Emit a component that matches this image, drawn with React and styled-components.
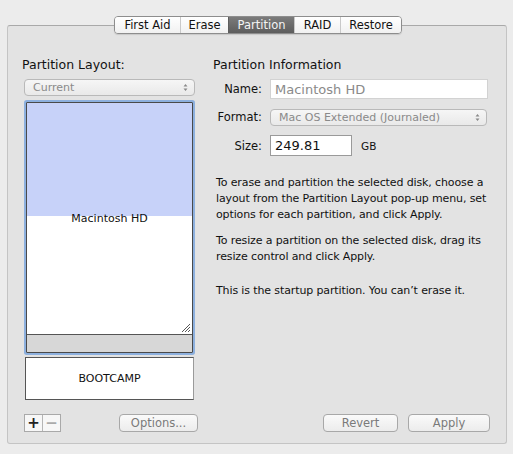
import React from 'react'
import styled, { createGlobalStyle, css } from 'styled-components'

const GlobalStyle = createGlobalStyle`
  html, body {
    margin: 0;
    padding: 0;
    background: #ececec;
  }
  body {
    font-family: "Lucida Grande", "DejaVu Sans", sans-serif;
    color: #111;
    -webkit-font-smoothing: antialiased;
  }
`

const Window = styled.div`
  width: 513px;
  height: 454px;
  box-sizing: border-box;
  padding: 16px 6px 10px 7px;
  display: flex;
  flex-direction: column;
`

const TabBar = styled.div`
  display: flex;
  align-self: flex-start;
  margin-left: 107px;
  margin-bottom: -9px;
  position: relative;
  z-index: 1;
  border: 1px solid #8d8d8d;
  border-radius: 4px;
  overflow: hidden;
  box-shadow: 0 1px 1px rgba(0, 0, 0, 0.12);
`

const Tab = styled.div`
  width: ${({ $w }) => $w}px;
  height: 16px;
  line-height: 16px;
  text-align: center;
  font-size: 11.5px;
  background: linear-gradient(#ffffff, #f1f1f1);
  color: #111;
  & + & {
    border-left: 1px solid #c9c9c9;
  }
  ${({ $active }) =>
    $active &&
    css`
      background: linear-gradient(#7b7b7b, #5d5d5d);
      color: #f4f4f4;
      border-left-color: #5d5d5d !important;
    `}
`

const Panel = styled.div`
  flex: 1;
  background: #e3e3e3;
  border: 1px solid #c4c4c4;
  border-top-color: #a9a9a9;
  border-radius: 3px;
  padding: 31px 16px 11px 16px;
  display: grid;
  grid-template-columns: 171px 1fr;
  column-gap: 18px;
`

const Column = styled.div`
  display: flex;
  flex-direction: column;
  min-height: 0;
`

const Heading = styled.div`
  font-size: 12.5px;
  height: 16px;
  line-height: 16px;
  margin-bottom: ${({ $mb }) => $mb}px;
  margin-left: ${({ $ml }) => $ml || 0}px;
`

const Popup = styled.div`
  height: 15px;
  border: 1px solid #b9b9b9;
  border-radius: 4px;
  background: linear-gradient(#f6f6f6, #e9e9e9);
  display: flex;
  align-items: center;
  justify-content: space-between;
  padding: 0 6px 0 8px;
  font-size: 11px;
  color: #8a8a8a;
  width: ${({ $w }) => $w}px;
`

const MapBox = styled.div`
  margin: 6px 2px 0 2px;
  height: 249px;
  border: 1px solid #4a4a4a;
  box-shadow: 0 0 0 2px #8db0de;
  border-radius: 1px;
  display: flex;
  flex-direction: column;
  background: #d7d7d7;
`

const Volume = styled.div`
  position: relative;
  height: 231px;
  background: #fff;
  border-bottom: 1px solid #555;
  display: flex;
  align-items: center;
  justify-content: center;
`

const Used = styled.div`
  position: absolute;
  left: 0;
  right: 0;
  top: 0;
  height: 113px;
  background: #c7d2f9;
`

const VolumeLabel = styled.span`
  position: relative;
  font-size: 11px;
`

const Grip = styled.svg`
  position: absolute;
  right: 2px;
  bottom: 2px;
`

const Bootcamp = styled.div`
  margin: 4px 1px 0 1px;
  height: 41px;
  border: 1px solid #555;
  border-right-color: #9a9a9a;
  background: #fff;
  display: flex;
  align-items: center;
  justify-content: center;
  font-size: 11px;
`

const BottomRow = styled.div`
  margin-top: auto;
  margin-right: ${({ $mr }) => $mr || 0}px;
  display: flex;
  align-items: center;
  justify-content: ${({ $end }) => ($end ? 'flex-end' : 'space-between')};
  gap: 10px;
`

const Segmented = styled.div`
  display: flex;
  border: 1px solid #a9a9a9;
  background: #f7f7f7;
  height: 16px;
`

const SegButton = styled.div`
  width: 17px;
  display: flex;
  align-items: center;
  justify-content: center;
  font-size: 15px;
  font-weight: bold;
  color: ${({ $dim }) => ($dim ? '#aaa' : '#222')};
  & + & {
    border-left: 1px solid #b5b5b5;
  }
`

const Button = styled.div`
  width: ${({ $w }) => $w}px;
  height: 16px;
  border: 1px solid #a8a8a8;
  border-radius: 4px;
  background: linear-gradient(#fafafa, #ececec);
  display: flex;
  align-items: center;
  justify-content: center;
  font-size: 11.5px;
  color: #7a7a7a;
`

const FormRow = styled.div`
  display: flex;
  align-items: center;
  height: ${({ $h }) => $h}px;
  margin-bottom: ${({ $mb }) => $mb}px;
`

const Label = styled.div`
  width: 49px;
  text-align: right;
  font-size: 11.5px;
  margin-right: 8px;
`

const TextField = styled.div`
  width: ${({ $w }) => $w}px;
  height: ${({ $h }) => $h}px;
  box-sizing: border-box;
  border: 1px solid ${({ $dim }) => ($dim ? '#d2d2d2' : '#9a9a9a')};
  background: #fff;
  padding-left: 4px;
  display: flex;
  align-items: center;
  font-size: 13px;
  color: ${({ $dim }) => ($dim ? '#8a8a8a' : '#111')};
`

const Unit = styled.span`
  margin-left: 9px;
  font-size: 10.5px;
`

const Para = styled.p`
  margin: 0 -6px ${({ $mb }) => $mb}px 3px;
  font-size: 11px;
  letter-spacing: -0.12px;
  line-height: 16px;
`

const Stepper = () => (
  <svg width="5" height="9" viewBox="0 0 5 9">
    <path d="M0.5 3.5 L2.5 1 L4.5 3.5 Z M0.5 5.5 L2.5 8 L4.5 5.5 Z" fill="#8a8a8a" />
  </svg>
)

export default function App() {
  return (
    <>
      <GlobalStyle />
      <Window>
        <TabBar>
          <Tab $w={65}>First Aid</Tab>
          <Tab $w={47}>Erase</Tab>
          <Tab $w={65} $active>Partition</Tab>
          <Tab $w={45}>RAID</Tab>
          <Tab $w={60}>Restore</Tab>
        </TabBar>
        <Panel>
          <Column>
            <Heading $mb={6} $ml={-2}>Partition Layout:</Heading>
            <Popup>
              <span>Current</span>
              <Stepper />
            </Popup>
            <MapBox>
              <Volume>
                <Used />
                <VolumeLabel>Macintosh HD</VolumeLabel>
                <Grip width="9" height="9" viewBox="0 0 9 9">
                  <path d="M1 9 L9 1 M4 9 L9 4 M7 9 L9 7" stroke="#444" strokeWidth="0.9" />
                </Grip>
              </Volume>
            </MapBox>
            <Bootcamp>BOOTCAMP</Bootcamp>
            <BottomRow $mr={-3}>
              <Segmented>
                <SegButton>+</SegButton>
                <SegButton $dim>−</SegButton>
              </Segmented>
              <Button $w={77}>Options...</Button>
            </BottomRow>
          </Column>
          <Column>
            <Heading $mb={6}>Partition Information</Heading>
            <FormRow $h={20} $mb={9}>
              <Label>Name:</Label>
              <TextField $w={218} $h={20} $dim>
                Macintosh HD
              </TextField>
            </FormRow>
            <FormRow $h={18} $mb={9}>
              <Label>Format:</Label>
              <Popup $w={201}>
                <span>Mac OS Extended (Journaled)</span>
                <Stepper />
              </Popup>
            </FormRow>
            <FormRow $h={21} $mb={19}>
              <Label>Size:</Label>
              <TextField $w={82} $h={21}>
                249.81
              </TextField>
              <Unit>GB</Unit>
            </FormRow>
            <Para $mb={10}>
              To erase and partition the selected disk, choose a layout from the Partition Layout
              pop-up menu, set options for each partition, and click Apply.
            </Para>
            <Para $mb={18}>
              To resize a partition on the selected disk, drag its resize control and click Apply.
            </Para>
            <Para $mb={0}>This is the startup partition. You can’t erase it.</Para>
            <BottomRow $end>
              <Button $w={73}>Revert</Button>
              <Button $w={80}>Apply</Button>
            </BottomRow>
          </Column>
        </Panel>
      </Window>
    </>
  )
}
